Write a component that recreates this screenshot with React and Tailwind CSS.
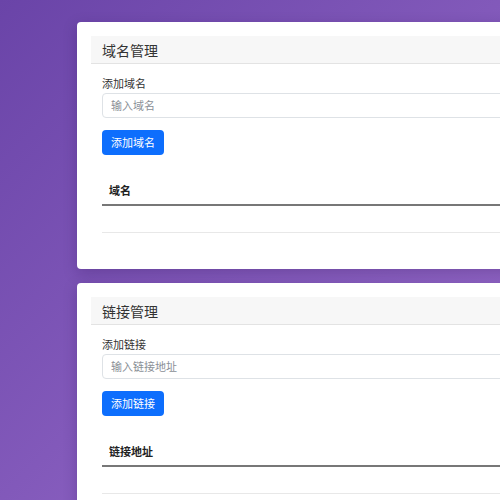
const Section = ({ title, label, placeholder, button, column }) => (
  <div className="w-[560px] bg-white rounded-[4px] shadow-[0_4px_14px_rgba(40,10,80,0.25)] p-[14px]">
    <div className="h-[28px] bg-[#f7f7f7] border-b border-[#e3e3e3] px-[11px] flex items-center">
      <h3 className="text-[14px] leading-[18px] text-[#333]">{title}</h3>
    </div>
    <div className="px-[11px] pt-[11px]">
      <label className="block text-[11px] leading-[16px] text-[#333]">
        {label}
      </label>
      <input
        type="text"
        placeholder={placeholder}
        className="w-full h-[25px] px-[8px] text-[11px] border border-[#dee2e6] rounded-[4px] outline-none placeholder:text-[#8a8f96]"
      />
      <button className="mt-[12px] h-[25px] px-[9px] text-[11px] text-white bg-[#0d6efd] rounded-[4px]">
        {button}
      </button>
      <table className="w-full mt-[22px] mb-[22px] border-collapse">
        <thead>
          <tr className="border-b-2 border-[#777]">
            <th className="h-[28px] px-[7px] text-left text-[11px] font-bold text-[#222]">
              {column}
            </th>
          </tr>
        </thead>
        <tbody>
          <tr className="border-b border-[#e8e8e8]">
            <td className="h-[28px]"></td>
          </tr>
        </tbody>
      </table>
    </div>
  </div>
);

export default function App() {
  return (
    <div
      className="w-[500px] h-[500px] overflow-hidden bg-gradient-to-br from-[#6a44a8] to-[#9b6ecc]"
      style={{ fontFamily: '"Noto Sans CJK SC", "Noto Sans", sans-serif' }}
    >
      <div className="pl-[77px] pt-[22px] flex flex-col gap-[14px]">
        <Section
          title="域名管理"
          label="添加域名"
          placeholder="输入域名"
          button="添加域名"
          column="域名"
        />
        <Section
          title="链接管理"
          label="添加链接"
          placeholder="输入链接地址"
          button="添加链接"
          column="链接地址"
        />
      </div>
    </div>
  );
}
